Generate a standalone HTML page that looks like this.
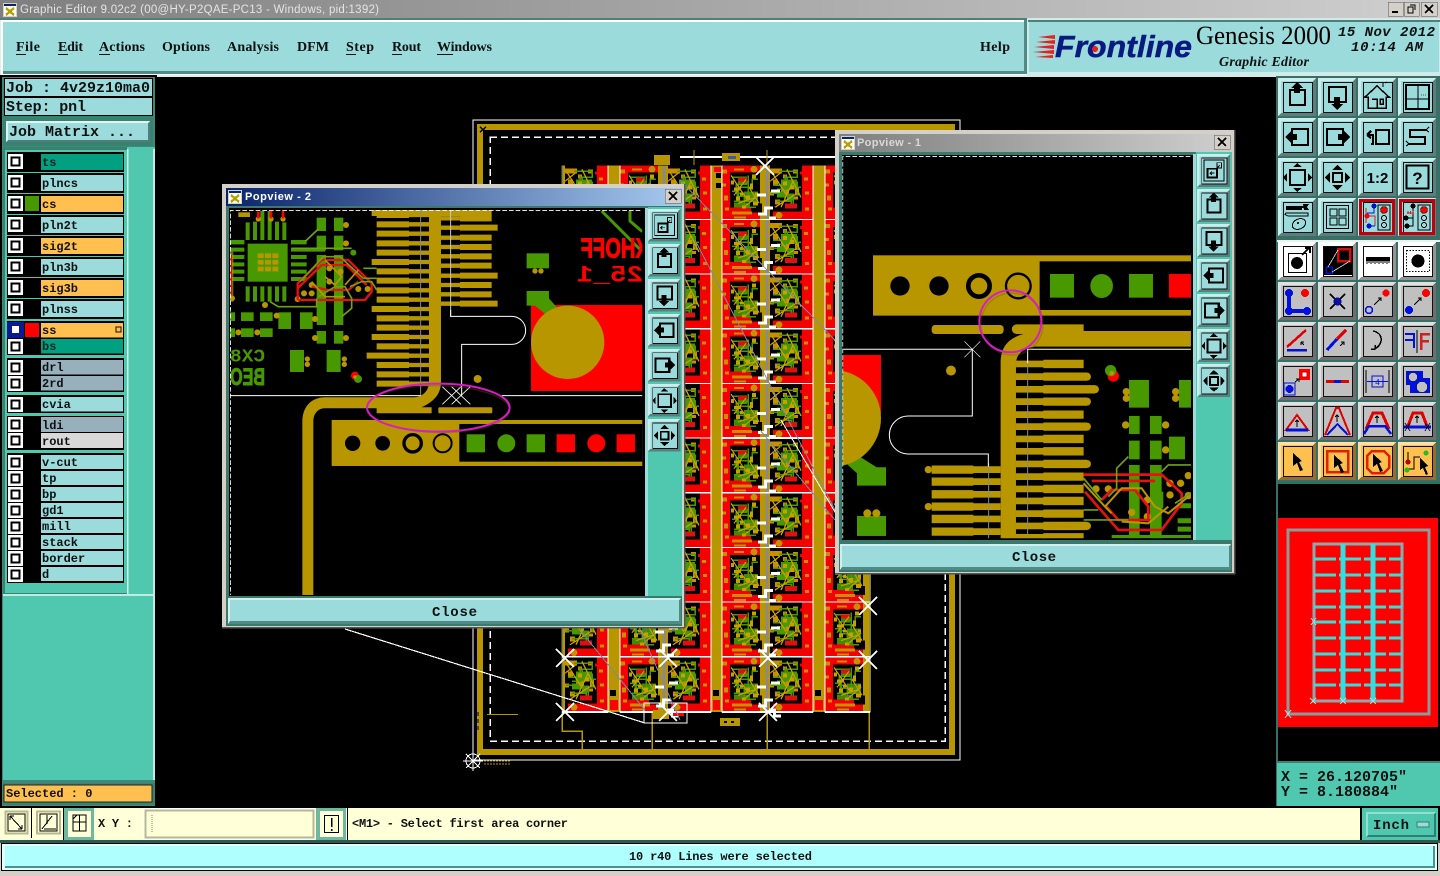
<!DOCTYPE html>
<html><head><meta charset="utf-8"><title>Graphic Editor</title>
<style>
html,body{margin:0;padding:0;background:#000;width:1440px;height:876px;overflow:hidden}
svg{display:block}
.m{font-family:"Liberation Mono",monospace;font-weight:bold;fill:#101010}
.s{font-family:"Liberation Serif",serif;font-weight:bold;fill:#101010;font-size:14px}
.a{font-family:"Liberation Sans",sans-serif;font-weight:bold;font-size:11px}
</style></head><body>
<svg width="1440" height="876" viewBox="0 0 1440 876" xmlns="http://www.w3.org/2000/svg" shape-rendering="crispEdges">
<defs>
<linearGradient id="tg" x1="0" x2="1" y1="0" y2="0"><stop offset="0" stop-color="#7f7f7f"/><stop offset="1" stop-color="#cfcfcf"/></linearGradient>
<linearGradient id="tb" x1="0" x2="1" y1="0" y2="0"><stop offset="0" stop-color="#0a246a"/><stop offset="1" stop-color="#a6caf0"/></linearGradient>
<clipPath id="c2"><rect x="15" y="75" width="1237" height="1155"/></clipPath>
<clipPath id="c1"><rect x="22" y="78" width="1046" height="1147"/></clipPath>

<g id="ico"><rect x="0" y="0" width="14" height="14" fill="#d4d0c8"/><rect x="1" y="1" width="12" height="2" fill="#0a246a"/><rect x="1" y="3" width="12" height="10" fill="#fff"/><path d="M3 5L11 12M11 5L3 12" stroke="#b8a000" stroke-width="2.4"/></g>

<!-- button frame -->
<g id="bt"><rect width="38" height="38" fill="currentColor"/>
<path d="M0 0H38L35 3H3V35L0 38Z" fill="#fff" opacity=".5"/>
<path d="M38 38H0L3 35H35V3L38 0Z" fill="#000" opacity=".42"/>
<rect x="5.5" y="4.5" width="29" height="30" fill="none" stroke="#111" stroke-width="1"/></g>

<g id="i-up" fill="none" stroke="#000" stroke-width="2.4"><rect x="12" y="12" width="15" height="15"/><path d="M19 4L25 10H22V15H16V10H13Z" fill="#000" stroke="none"/></g>
<g id="i-down" fill="none" stroke="#000" stroke-width="2.4"><rect x="11" y="9" width="17" height="15"/><path d="M19 32L13 26H16V19H22V26H25Z" fill="#000" stroke="none"/></g>
<g id="i-left" fill="none" stroke="#000" stroke-width="2.4"><rect x="14" y="11" width="16" height="16"/><path d="M7 19L13 13V16H19V22H13V25Z" fill="#000" stroke="none"/></g>
<g id="i-right" fill="none" stroke="#000" stroke-width="2.4"><rect x="9" y="11" width="16" height="16"/><path d="M32 19L26 13V16H20V22H26V25Z" fill="#000" stroke="none"/></g>
<g id="i-exp"><rect x="12" y="12" width="15" height="15" fill="none" stroke="#000" stroke-width="2"/><path d="M15 9L19 5L24 9ZM15 30L19 34L24 30ZM9 15L5 19.5L9 24ZM30 15L34 19.5L30 24Z" fill="#000"/></g>
<g id="i-arr"><rect x="15" y="15" width="9" height="9" fill="none" stroke="#000" stroke-width="2"/><path d="M14 12L19.500 7L25 12ZM14 27L19.500 32L25 27ZM12 14L7 19.500L12 25ZM27 14L32 19.500L27 25Z" fill="#000"/></g>
<g id="i-win" fill="none" stroke="#000"><rect x="8" y="7" width="23" height="24" stroke-width="1"/><rect x="12" y="17" width="11" height="10" stroke-width="2"/><rect x="23" y="10" width="5" height="6" stroke-width="1"/><path d="M20 22H15M17 20L15 22L17 24" stroke-width="1"/><path d="M22 17L26 13" stroke-width="1"/></g>

<!-- pcb half cells -->
<g id="a">
<rect width="40" height="54.7" fill="#f40000"/>
<rect x="8" y="7" width="31" height="35" fill="#000"/>
<rect x="38" width="8" height="54.7" fill="#b89600"/>
<rect x="29" y="38" width="11" height="9" fill="#000"/>
<circle cx="32" cy="4" r="3.400" fill="#c89000"/>
<path d="M0 4h5v4h-5zM0 18h4v3h-4zM2 30h4v5h-4zM10 46h20v3h-20zM12 3h10v2h-10zM3 42h4v3h-4zM12 51h12v2h-12z" fill="#c89000"/>
<path d="M10 12h14v7h-8v12h16M14 18v10h8v8h10M12 36h10v6h12M26 10v20h8M18 22h12v-8h6M10 26h5v10" fill="none" stroke="#489800" stroke-width="1.500"/>
<path d="M16 15h10v4h-10zM22 26h14v10h-14zM12 37h16v5h-16z" fill="#489800" opacity=".9"/>
<path d="M16 12h9v4h-9z" fill="#e01010"/>
<path d="M12 22h7v3h-7zM28 18h3v6h-3zM24 30h4v4h-4zM31 36h5v4h-5zM14 31h4v4h-4zM20 40h4v3h-4zM30 9h4v4h-4zM9 15h3v4h-3zM18 27h3v3h-3zM33 27h3v3h-3z" fill="#c8a000"/>
<path d="M9 10l16 24M27 22l10 16M16 38l18-6M12 30l12-16M22 42l14-12" stroke="#c8a000" stroke-width="1.200" fill="none"/>
</g>
<g id="b">
<rect width="46" height="54.7" fill="#000"/>
<rect x="35" width="11" height="54.7" fill="#f40000"/>
<rect x="6" y="46" width="34" height="8.7" fill="#f40000"/>
<circle cx="12" cy="50" r="3.400" fill="#c89000"/>
<rect x="33" y="6" width="4" height="3" fill="#f40000"/>
<rect y="0" width="3" height="54.7" fill="#b89600"/>
<path d="M3 3h12v5h-12zM6 14h5v6h-5zM26 4h5v4h-5zM14 24h8v5h-8zM28 22h4v8h-4zM8 34h5v5h-5zM21 38h4v4h-4zM37 12h4v3h-4zM38 26h4v3h-4zM38 42h4v3h-4zM16 9h4v4h-4zM3 26h4v4h-4zM26 31h5v3h-5z" fill="#c89000"/>
<path d="M12 6h18v6h-10v10h14M6 20h10v10h10v10M10 36h14v6M18 10v14h-8M30 16v14M4 28h8" fill="none" stroke="#489800" stroke-width="1.500"/>
<path d="M14 14h16v10h-16zM10 26h9v6h-9zM20 28h7v7h-7z" fill="#489800"/>
<path d="M18 38h12v5h-12z" fill="#e01010"/>
<path d="M5 7l14 22M20 4l14 28M8 42l22-14M3 16l10-8M14 42l12-26" stroke="#c8a000" stroke-width="1.300" fill="none"/>
<path d="M16 16h4v4h-4zM23 20h4v4h-4z" fill="#c8a000"/>
</g>
<g id="st" fill="#fff">
<rect x="-10" y="28" width="9" height="3"/><rect x="4" y="24" width="9" height="3"/>
<path d="M-9 50h9v-6h6v-3h-9v6h-6zM6 60h8v-3h-5v-6h-7v3h4z"/>
</g>
<g id="row">
<use href="#b" x="562"/><use href="#a" x="620"/><use href="#b" x="665"/><use href="#a" x="722"/><use href="#b" x="767"/><use href="#a" x="825"/>
<rect x="608" width="12" height="54.7" fill="#b89600"/><rect x="711" width="11" height="54.7" fill="#b89600"/><rect x="813" width="12" height="54.700" fill="#b89600"/>
<path d="M664 0v55M767 0v55" stroke="#8a8a8a" stroke-width="3"/>
<path d="M562 0v55M870 0v55" stroke="#808060" stroke-width="1.500"/>
<path d="M620 0v55M711 0v55M722 0v55M813 0v55M825 0v55M608 0v55" stroke="#fff" stroke-width="1"/>
<rect x="562" y="53.500" width="46" height="2" fill="#fff"/><rect x="620" y="53.500" width="91" height="2" fill="#fff"/><rect x="722" y="53.500" width="91" height="2" fill="#fff"/><rect x="825" y="53.500" width="45" height="2" fill="#fff"/>
<use href="#st" x="767"/><use href="#st" x="665"/>
</g>
<g id="x"><path d="M-9 -9L9 9M9 -9L-9 9" stroke="#fff" stroke-width="1.500"/></g>
</defs>

<!-- base -->
<rect width="1440" height="876" fill="#000"/>
<rect width="1440" height="18" fill="url(#tg)"/>
<use href="#ico" x="3" y="3"/>
<text x="20" y="13" class="a" style="font-weight:normal;font-size:11.500px" fill="#e4e4e4" textLength="359">Graphic Editor 9.02c2 (00@HY-P2QAE-PC13 - Windows, pid:1392)</text>
<g><rect x="1388" y="2" width="15" height="14" fill="#d4d0c8" stroke="#555" stroke-width=".5"/><rect x="1404" y="2" width="15" height="14" fill="#d4d0c8" stroke="#555" stroke-width=".5"/><rect x="1421" y="2" width="16" height="14" fill="#d4d0c8" stroke="#555" stroke-width=".5"/><path d="M1392 12h6" stroke="#000" stroke-width="2"/><path d="M1408 7h5v6h-5zM1410 5h5v5" fill="none" stroke="#000" stroke-width="1.200"/><path d="M1425 5l8 8M1433 5l-8 8" stroke="#000" stroke-width="1.500"/></g>

<!-- menu -->
<rect y="18" width="1440" height="59" fill="#d8f0ee"/>
<rect x="0" y="18" width="1027" height="2" fill="#4f7f78"/>
<rect x="1" y="20" width="1026" height="55" fill="#fff"/>
<rect x="3" y="22" width="1022" height="50" fill="#9bdbdb"/>
<rect x="3" y="71" width="1024" height="3" fill="#4f8a84"/>
<rect x="1024" y="20" width="3" height="54" fill="#4f8a84"/>
<text x="16" y="51" class="s" textLength="24">File</text><rect x="16" y="54" width="10" height="1" fill="#111"/>
<text x="58" y="51" class="s" textLength="25">Edit</text><rect x="58" y="54" width="10" height="1" fill="#111"/>
<text x="99" y="51" class="s" textLength="46">Actions</text><rect x="99" y="54" width="11" height="1" fill="#111"/>
<text x="162" y="51" class="s" textLength="48">Options</text>
<text x="227" y="51" class="s" textLength="52">Analysis</text>
<text x="297" y="51" class="s" textLength="32">DFM</text>
<text x="346" y="51" class="s" textLength="28">Step</text><rect x="346" y="54" width="10" height="1" fill="#111"/>
<text x="392" y="51" class="s" textLength="29">Rout</text><rect x="392" y="54" width="10" height="1" fill="#111"/>
<text x="437" y="51" class="s" textLength="55">Windows</text><rect x="437" y="54" width="16" height="1" fill="#111"/>
<text x="980" y="51" class="s" textLength="30">Help</text>

<!-- logo panel -->
<rect x="1027" y="18" width="413" height="59" fill="#d0ecea"/>
<rect x="1028" y="20" width="412" height="2" fill="#4f7f78"/>
<rect x="1029" y="22" width="410" height="50" fill="#9bdbdb"/>
<path d="M1038 37L1055 35V39ZM1036 42L1055 40V44ZM1034 47L1054 45V49ZM1033 52L1054 50V54ZM1035 57L1053 55V58Z" fill="#e82020" shape-rendering="auto"/>
<text x="1055" y="57" font-family="Liberation Sans" font-weight="bold" font-style="italic" font-size="31" fill="#0a1a80" textLength="137" lengthAdjust="spacingAndGlyphs" stroke="#0a1a80" stroke-width=".5">Frontline</text>
<circle cx="1095" cy="49" r="3" fill="#e82020"/>
<text x="1196" y="44" font-family="Liberation Serif" font-size="26" fill="#000" textLength="135" lengthAdjust="spacingAndGlyphs">Genesis 2000</text>
<text x="1219" y="66" font-family="Liberation Serif" font-weight="bold" font-style="italic" font-size="14" fill="#111" textLength="90">Graphic Editor</text>
<text x="1338" y="36" font-family="Liberation Mono" font-style="italic" font-weight="bold" font-size="14" fill="#111" textLength="97">15 Nov 2012</text>
<text x="1351" y="51" font-family="Liberation Mono" font-style="italic" font-weight="bold" font-size="14" fill="#111" textLength="72">10:14 AM</text>

<!-- left panel -->
<rect x="0" y="75" width="157" height="733" fill="#000"/>
<rect x="2" y="77" width="153" height="729" fill="#3d8a7a"/>
<rect x="3" y="78" width="150" height="68" fill="#3a8270"/>
<rect x="4" y="78" width="149" height="19" fill="#000"/><rect x="5" y="79" width="147" height="17" fill="#9bdbdb"/>
<rect x="4" y="97" width="149" height="19" fill="#000"/><rect x="5" y="98" width="147" height="17" fill="#9bdbdb"/>
<text x="6" y="92" class="m" font-size="15" textLength="144">Job : 4v29z10ma0</text>
<text x="6" y="111" class="m" font-size="15" textLength="80">Step: pnl</text>
<rect x="6" y="121" width="144" height="21" fill="#9bdbdb"/>
<path d="M6 121H150L148 123H8V140L6 142Z" fill="#fff" opacity=".7"/><path d="M150 142H6L8 140H148V123L150 121Z" fill="#4f7f78"/>
<text x="9" y="136" class="m" font-size="15" textLength="126">Job Matrix ...</text>
<rect x="3" y="147" width="152" height="633" fill="#50c8b0"/>
<rect x="3" y="147" width="124" height="447" fill="#3a8270"/>
<rect x="5" y="150" width="122" height="443" fill="#50c8b0"/>
<rect x="127" y="149" width="1.500" height="445" fill="#d0f0e8"/>
<rect x="153" y="149" width="2" height="631" fill="#c0ece0"/>
<rect x="3" y="594" width="152" height="2" fill="#c0ece0"/>

<!-- layer rows -->
<g>
<g id="lay">
<rect x="7" y="152" width="117" height="20" fill="#000"/><rect x="7" y="173" width="117" height="20" fill="#000"/><rect x="7" y="194" width="117" height="20" fill="#000"/><rect x="7" y="215" width="117" height="20" fill="#000"/><rect x="7" y="236" width="117" height="20" fill="#000"/><rect x="7" y="257" width="117" height="20" fill="#000"/><rect x="7" y="278" width="117" height="20" fill="#000"/><rect x="7" y="299" width="117" height="20" fill="#000"/>
<rect x="7" y="321" width="117" height="34" fill="#000"/><rect x="7" y="358" width="117" height="34" fill="#000"/><rect x="7" y="395" width="117" height="18" fill="#000"/><rect x="7" y="416" width="117" height="34" fill="#000"/><rect x="7" y="453" width="117" height="130" fill="#000"/>
</g>
<rect x="41" y="154" width="82" height="16" fill="#00a080"/><rect x="41" y="175" width="82" height="16" fill="#9bdbdb"/><rect x="41" y="196" width="82" height="16" fill="#ffc050"/><rect x="41" y="217" width="82" height="16" fill="#9bdbdb"/><rect x="41" y="238" width="82" height="16" fill="#ffc050"/><rect x="41" y="259" width="82" height="16" fill="#9bdbdb"/><rect x="41" y="280" width="82" height="16" fill="#ffc050"/><rect x="41" y="301" width="82" height="16" fill="#9bdbdb"/>
<rect x="41" y="323" width="82" height="14.500" fill="#ffc050"/><rect x="41" y="339" width="82" height="14.500" fill="#00a080"/>
<rect x="41" y="360" width="82" height="14.500" fill="#98b0bc"/><rect x="41" y="376" width="82" height="14.500" fill="#98b0bc"/>
<rect x="41" y="397" width="82" height="14.500" fill="#9bdbdb"/>
<rect x="41" y="417" width="82" height="15" fill="#98b0bc"/><rect x="41" y="433" width="82" height="15" fill="#d8d8d8"/>
<rect x="41" y="455" width="82" height="14" fill="#9bdbdb"/><rect x="41" y="471" width="82" height="14" fill="#9bdbdb"/><rect x="41" y="487" width="82" height="14" fill="#9bdbdb"/><rect x="41" y="503" width="82" height="14" fill="#9bdbdb"/><rect x="41" y="519" width="82" height="14" fill="#9bdbdb"/><rect x="41" y="535" width="82" height="14" fill="#9bdbdb"/><rect x="41" y="551" width="82" height="14" fill="#9bdbdb"/><rect x="41" y="567" width="82" height="14" fill="#9bdbdb"/>
<rect x="25" y="196" width="14" height="15" fill="#489800"/>
<rect x="25" y="323" width="14" height="14" fill="#f00"/>
<rect x="7" y="322" width="17" height="16" fill="#0a1a90"/>
<g fill="#fff"><rect x="8" y="154" width="15" height="15"/><rect x="8" y="175" width="15" height="15"/><rect x="8" y="196" width="15" height="15"/><rect x="8" y="217" width="15" height="15"/><rect x="8" y="238" width="15" height="15"/><rect x="8" y="259" width="15" height="15"/><rect x="8" y="280" width="15" height="15"/><rect x="8" y="301" width="15" height="15"/><rect x="8" y="339" width="15" height="15"/><rect x="8" y="360" width="15" height="15"/><rect x="8" y="376" width="15" height="15"/><rect x="8" y="397" width="15" height="15"/><rect x="8" y="417" width="15" height="15"/><rect x="8" y="433" width="15" height="15"/><rect x="8" y="455" width="15" height="15"/><rect x="8" y="471" width="15" height="15"/><rect x="8" y="487" width="15" height="15"/><rect x="8" y="503" width="15" height="15"/><rect x="8" y="519" width="15" height="15"/><rect x="8" y="535" width="15" height="15"/><rect x="8" y="551" width="15" height="15"/><rect x="8" y="567" width="15" height="15"/></g>
<g fill="none" stroke="#000" stroke-width="2"><rect x="11.500" y="157.500" width="8" height="8"/><rect x="11.500" y="178.500" width="8" height="8"/><rect x="11.500" y="199.500" width="8" height="8"/><rect x="11.500" y="220.500" width="8" height="8"/><rect x="11.500" y="241.500" width="8" height="8"/><rect x="11.500" y="262.500" width="8" height="8"/><rect x="11.500" y="283.500" width="8" height="8"/><rect x="11.500" y="304.500" width="8" height="8"/><rect x="11.500" y="342.500" width="8" height="8"/><rect x="11.500" y="363.500" width="8" height="8"/><rect x="11.500" y="379.500" width="8" height="8"/><rect x="11.500" y="400.500" width="8" height="8"/><rect x="11.500" y="420.500" width="8" height="8"/><rect x="11.500" y="436.500" width="8" height="8"/><rect x="11.500" y="458.500" width="8" height="8"/><rect x="11.500" y="474.500" width="8" height="8"/><rect x="11.500" y="490.500" width="8" height="8"/><rect x="11.500" y="506.500" width="8" height="8"/><rect x="11.500" y="522.500" width="8" height="8"/><rect x="11.500" y="538.500" width="8" height="8"/><rect x="11.500" y="554.500" width="8" height="8"/><rect x="11.500" y="570.500" width="8" height="8"/></g>
<rect x="12" y="326" width="7" height="7" fill="#fff"/>
<rect x="116" y="327" width="5" height="5" fill="none" stroke="#111" stroke-width="1"/>
<g class="m" font-size="12" style="font-family:'Liberation Mono',monospace;font-weight:bold">
<text x="42" y="166" fill="#04261e">ts</text><text x="42" y="187">plncs</text><text x="42" y="208">cs</text><text x="42" y="229">pln2t</text><text x="42" y="250">sig2t</text><text x="42" y="271">pln3b</text><text x="42" y="292">sig3b</text><text x="42" y="313">plnss</text>
<text x="42" y="334">ss</text><text x="42" y="350" fill="#04261e">bs</text><text x="42" y="371">drl</text><text x="42" y="387">2rd</text><text x="42" y="408">cvia</text><text x="42" y="429">ldi</text><text x="42" y="445">rout</text>
<text x="42" y="466">v-cut</text><text x="42" y="482">tp</text><text x="42" y="498">bp</text><text x="42" y="514">gd1</text><text x="42" y="530">mill</text><text x="42" y="546">stack</text><text x="42" y="562">border</text><text x="42" y="578">d</text>
</g>
</g>
<rect x="3" y="783" width="152" height="22" fill="#3a8270"/>
<rect x="4" y="785" width="148" height="17" fill="#ffc050" stroke="#222" stroke-width=".6"/>
<text x="6" y="797" class="m" font-size="12">Selected : 0</text>

<!-- main board -->
<path d="M473 120H960V760H473Z" fill="none" stroke="#fff" stroke-width="1"/>
<rect x="480" y="127" width="472" height="625" fill="none" stroke="#b89600" stroke-width="6"/>
<path d="M490 137H945V741H490Z" fill="none" stroke="#fff" stroke-width="1.500" stroke-dasharray="7 4"/>
<path d="M487 714.500h31" stroke="#b89600" stroke-width="1"/>
<path d="M478 712v20" stroke="#504040" stroke-width="2" stroke-dasharray="4 3"/>
<path d="M562 712v19h20v18M652 712v37M767 712v37M869 712v37" fill="none" stroke="#b89600" stroke-width="1.500"/>
<rect x="720" y="718" width="20" height="8" fill="#b89600"/><rect x="724" y="721" width="3" height="2" fill="#000"/><rect x="731" y="721" width="3" height="2" fill="#000"/>
<path d="M680 157H835" stroke="#fff" stroke-width="2"/>
<rect x="654" y="155" width="16" height="10" fill="#b89600"/><rect x="722" y="153" width="18" height="8" fill="#b89600"/><rect x="728" y="156" width="8" height="3" fill="#3a5ab0"/>
<path d="M694 150V165M767 150V165" stroke="#b89600" stroke-width="1"/>
<use href="#row" y="165.300"/><use href="#row" y="220"/><use href="#row" y="274.700"/><use href="#row" y="329.300"/><use href="#row" y="384"/><use href="#row" y="438.700"/><use href="#row" y="493.300"/><use href="#row" y="548"/><use href="#row" y="602.700"/><use href="#row" y="657.300"/>
<rect x="722" y="437" width="91" height="2" fill="#fff"/>
<g fill="#000"><rect x="716" y="173" width="5" height="5"/><rect x="716" y="183" width="5" height="5"/></g><rect x="714" y="167" width="7" height="5" fill="#f00"/>
<g><rect x="610" y="690" width="6" height="6" fill="#000"/><rect x="610" y="700" width="8" height="10" fill="#f00"/><rect x="713" y="690" width="6" height="6" fill="#000"/><rect x="713" y="700" width="7" height="10" fill="#f00"/><rect x="815" y="690" width="6" height="6" fill="#000"/><rect x="815" y="700" width="8" height="10" fill="#f00"/></g>
<rect x="653" y="710" width="16" height="9" fill="#b89600"/><rect x="673" y="713" width="11" height="3" fill="#f00"/>
<rect x="644" y="703" width="43" height="20" fill="none" stroke="#fff" stroke-width="1"/>
<path d="M345 629L645 723" stroke="#fff" stroke-width="1.200"/>
<path d="M680 180L835 340M695 240L835 510M760 430L835 520" stroke="#7f88a8" stroke-width="1" fill="none"/>
<path d="M580 630L645 710M640 630L680 720" stroke="#7f88a8" stroke-width="1" fill="none"/>
<path d="M781 420L835 512" stroke="#fff" stroke-width="1"/>
<use href="#x" x="565" y="712"/><use href="#x" x="768" y="712"/><use href="#x" x="668" y="712"/><use href="#x" x="868" y="606"/><use href="#x" x="868" y="660"/><use href="#x" x="565" y="658"/><use href="#x" x="668" y="658"/><use href="#x" x="768" y="658"/><use href="#x" x="765" y="166"/>
<g fill="none" stroke="#fff" stroke-width="1"><circle cx="473" cy="761" r="7"/><path d="M463 761H483M473 751V771M466 754L480 768M480 754L466 768"/></g>
<path d="M484 761H510M484 764H510" stroke="#b89600" stroke-dasharray="2 1"/>
<path d="M480 127l6 5M486 127l-6 5" stroke="#000" stroke-width="1.500"/>

<!-- Right column -->
<rect x="1277" y="76" width="163" height="407" fill="#3a6f66"/>
<rect x="1277" y="481" width="163" height="3" fill="#2f6f60"/>
<rect x="1276" y="76" width="2" height="732" fill="#3a6f66"/>
<g color="#9bdbdb">
<g transform="translate(1278,78)"><use href="#bt"/><use href="#i-up"/></g>
<g transform="translate(1318,78)"><use href="#bt"/><use href="#i-down"/></g>
<g transform="translate(1358,78)"><use href="#bt"/><path d="M19 8L31 19H28V30H10V19H7ZM14 21H19V30M22 21H25V26H22Z" fill="none" stroke="#000" stroke-width="1.500"/><path d="M25 9V5M27 5l2-1" stroke="#000"/></g>
<g transform="translate(1398,78)"><use href="#bt"/><rect x="8" y="7" width="23" height="24" fill="none" stroke="#000" stroke-width="2"/><path d="M20 7V31M8 21H31" stroke="#000"/><path d="M23 17h6" stroke="#555" stroke-dasharray="1 1"/></g>
<g transform="translate(1278,118)"><use href="#bt"/><use href="#i-left"/></g>
<g transform="translate(1318,118)"><use href="#bt"/><use href="#i-right"/></g>
<g transform="translate(1358,118)"><use href="#bt"/><rect x="18" y="12" width="13" height="14" fill="none" stroke="#000" stroke-width="2"/><path d="M13 26H15V17H9M9 17l4-4M9 17l4 3" fill="none" stroke="#000" stroke-width="2.200"/></g>
<g transform="translate(1398,118)"><use href="#bt"/><path d="M28 12H12V19H27V26H11" fill="none" stroke="#000" stroke-width="2.400"/><path d="M28 12l3-3M28 12l3 2M11 26l-3-3M11 26l-3 2" stroke="#000" fill="none"/></g>
<g transform="translate(1278,158)"><use href="#bt"/><use href="#i-exp"/></g>
<g transform="translate(1318,158)"><use href="#bt"/><use href="#i-arr"/></g>
<g transform="translate(1358,158)"><use href="#bt"/><text x="19.500" y="25" text-anchor="middle" font-family="Liberation Sans" font-weight="bold" font-size="15" fill="#000">1:2</text></g>
<g transform="translate(1398,158)"><use href="#bt"/><rect x="8.500" y="7.500" width="22" height="23" fill="none" stroke="#000" stroke-width="2"/><text x="19.500" y="26" text-anchor="middle" font-family="Liberation Sans" font-weight="bold" font-size="17" fill="#000">?</text></g>
<g transform="translate(1278,198)"><use href="#bt"/><path d="M8 9H27M8 11H24" stroke="#000" stroke-width="2"/><path d="M25 6h6l-2 3 2 3h-5z" fill="#000"/><path d="M8 15H30V18H10L7 16.500Z" fill="none" stroke="#000"/><ellipse cx="21" cy="26" rx="7" ry="5" transform="rotate(-25 21 26)" fill="none" stroke="#000"/><circle cx="20" cy="25" r="1" fill="#000"/></g>
<g transform="translate(1318,198)"><use href="#bt"/><rect x="8.500" y="7.500" width="22" height="23" fill="none" stroke="#000"/><g fill="none" stroke="#000"><rect x="12" y="11" width="7" height="7"/><rect x="21" y="11" width="7" height="7"/><rect x="12" y="20" width="7" height="7"/><rect x="21" y="20" width="7" height="7"/></g></g>
<g transform="translate(1358,198)"><use href="#bt"/><rect x="2.500" y="2.500" width="33" height="33" fill="none" stroke="#c00010" stroke-width="3"/><path d="M8 10V25M8 18H17V28M8 18" fill="none" stroke="#d02020"/><circle cx="9" cy="18" r="2.500" fill="#f00"/><circle cx="16" cy="8" r="2.500" fill="#0010d0"/><circle cx="11" cy="28" r="2.500" fill="#0010d0"/><path d="M16 10V15H9M11 28H17" stroke="#0010d0" fill="none"/><rect x="20" y="7" width="12" height="25" fill="none" stroke="#000"/><circle cx="26" cy="12" r="3.500" fill="#f00" stroke="#000" stroke-width=".5"/><circle cx="26" cy="20" r="2.500" fill="none" stroke="#000"/><circle cx="26" cy="27" r="2.500" fill="none" stroke="#000"/></g>
<g transform="translate(1398,198)"><use href="#bt"/><rect x="2.500" y="2.500" width="33" height="33" fill="none" stroke="#c00010" stroke-width="3"/><path d="M15 8V20H8M15 20V28H9" fill="none" stroke="#000"/><circle cx="8" cy="20" r="2.500" fill="#000"/><circle cx="15" cy="8" r="2.500" fill="#000"/><circle cx="9" cy="28" r="2.500" fill="#000"/><path d="M9 15h7M10 13v3M12.500 13v3M15 13v3" stroke="#d02020"/><rect x="20" y="7" width="12" height="25" fill="none" stroke="#000"/><circle cx="26" cy="12" r="3.500" fill="#f00" stroke="#000" stroke-width=".5"/><circle cx="26" cy="20" r="2.500" fill="none" stroke="#000"/><circle cx="26" cy="27" r="2.500" fill="none" stroke="#000"/></g>
</g>

<!-- second group -->
<rect x="1277" y="240" width="163" height="2" fill="#e8f4f0"/>
<g color="#ffffff">
<g transform="translate(1278,242)"><use href="#bt"/><rect x="10.500" y="11.500" width="18" height="19" fill="none" stroke="#000"/><circle cx="19" cy="21" r="6" fill="#000"/><path d="M24 13L31 6M27 6H32V11" stroke="#000" stroke-width="2" fill="none"/></g>
<g transform="translate(1318,242)"><use href="#bt"/><rect x="6" y="5" width="28" height="28" fill="#000"/><rect x="20" y="7" width="12" height="12" fill="none" stroke="#d01010" stroke-width="2.500"/><rect x="8" y="25" width="6" height="6" fill="none" stroke="#0a10d0" stroke-width="1.500"/><path d="M10 25L20 8M14 30L32 19" stroke="#ddd" fill="none" stroke-width=".8"/></g>
<g transform="translate(1358,242)"><use href="#bt"/><rect x="8" y="15" width="24" height="4" fill="#000"/><path d="M9 19v3M11 19v2M13 19v3M15 19v2M17 19v3M19 19v2M21 19v3M23 19v2M25 19v3M27 19v2M29 19v3M31 19v2" stroke="#000"/></g>
<g transform="translate(1398,242)"><use href="#bt"/><rect x="8.500" y="8.500" width="23" height="21" fill="none" stroke="#000" stroke-dasharray="1.500 1.500"/><circle cx="20" cy="19" r="6.500" fill="#000"/></g>
</g>
<g color="#c0c0c0">
<g transform="translate(1278,282)"><use href="#bt"/><path d="M11 11V29H28" stroke="#0010e0" stroke-width="4" fill="none"/><circle cx="11" cy="11" r="4" fill="#0010e0"/><circle cx="11" cy="29" r="4" fill="#0010e0"/><circle cx="29" cy="29" r="4" fill="#0010e0"/><circle cx="27" cy="11" r="4" fill="#f00"/></g>
<g transform="translate(1318,282)"><use href="#bt"/><path d="M12 12L27 27M27 12L12 27" stroke="#000" stroke-width="2"/><circle cx="19.500" cy="19.500" r="4" fill="#0a10a0"/></g>
<g transform="translate(1358,282)"><use href="#bt"/><circle cx="11" cy="28" r="3.500" fill="none" stroke="#0010e0" stroke-width="1.500"/><circle cx="28" cy="11" r="3.500" fill="#f00"/><path d="M16 23L23 16M20 16H23V19" stroke="#000" fill="none"/></g>
<g transform="translate(1398,282)"><use href="#bt"/><circle cx="11" cy="28" r="4" fill="#0010e0"/><circle cx="28" cy="11" r="4" fill="#f00"/><path d="M16 23L23 16M20 16H23V19" stroke="#000" fill="none"/></g>
<g transform="translate(1278,322)"><use href="#bt"/><path d="M9 25L28 8" stroke="#e00000" stroke-width="2.500"/><path d="M9 28H29" stroke="#0010e0" stroke-width="2.500"/><path d="M23 20l3 3M23 20h3M23 20v3" stroke="#000" fill="none"/></g>
<g transform="translate(1318,322)"><use href="#bt"/><path d="M19 17L28 8" stroke="#e00000" stroke-width="3"/><path d="M9 28L19 17" stroke="#0010e0" stroke-width="3"/><path d="M22 24l4-4M23 20h3v3" stroke="#000" fill="none"/></g>
<g transform="translate(1358,322)"><use href="#bt"/><path d="M15 9C25 11 26 21 17 27M17 27V23M17 27H13" fill="none" stroke="#000" stroke-width="1.500"/></g>
<g transform="translate(1398,322)"><use href="#bt"/><path d="M7 12H16V26M7 18H15" fill="none" stroke="#0010e0" stroke-width="2"/><path d="M32 12H23V28M23 19H31" fill="none" stroke="#d02020" stroke-width="2.500"/><path d="M19 8V31" stroke="#000"/></g>
<g transform="translate(1278,362)"><use href="#bt"/><rect x="21" y="7" width="11" height="11" fill="#f00"/><rect x="24" y="10" width="5" height="5" fill="#fff" stroke="#c00"/><rect x="6" y="21" width="11" height="12" fill="none" stroke="#0010e0"/><circle cx="11.500" cy="27" r="4" fill="#0010e0"/><path d="M17 20l4-3M18 17h3v3" stroke="#000" fill="none"/></g>
<g transform="translate(1318,362)"><use href="#bt"/><path d="M8 19.500H31" stroke="#e00000" stroke-width="3"/><path d="M16 19.500H23" stroke="#0010e0" stroke-width="3"/></g>
<g transform="translate(1358,362)"><use href="#bt"/><path d="M8 8V31M31 8V31M9 19.500H30" stroke="#000" fill="none"/><path d="M9 19.500H30" stroke="#0010e0"/><rect x="14" y="14" width="11" height="11" fill="none" stroke="#0010e0"/><text x="19.500" y="23" text-anchor="middle" font-family="Liberation Sans" font-size="8" fill="#0010e0">4</text></g>
<g transform="translate(1398,362)"><use href="#bt"/><path d="M8 9H25V16H32V31H12V23H8Z" fill="#0010e0"/><circle cx="15" cy="15" r="4.500" fill="#c0c0c0" stroke="#000" stroke-width=".4"/><circle cx="24" cy="25" r="5.500" fill="#c0c0c0" stroke="#000" stroke-width=".4"/></g>
<g transform="translate(1278,402)"><use href="#bt"/><path d="M19 13L30 28H8Z" fill="none" stroke="#e00000" stroke-width="2"/><path d="M8 28H30" stroke="#0010e0" stroke-width="3"/><path d="M19 18V25M17 20L19 18L21 20" stroke="#000" fill="none"/></g>
<g transform="translate(1318,402)"><use href="#bt"/><path d="M7 33L18 6H21L32 33" fill="none" stroke="#e00000" stroke-width="2"/><path d="M9 33L19.500 22L30 33" fill="none" stroke="#0010e0" stroke-width="2"/><path d="M19 13V20M17 15L19 13L21 15" stroke="#000" fill="none"/></g>
<g transform="translate(1358,402)"><use href="#bt"/><path d="M8 27L15 11H24L31 27" fill="none" stroke="#e00000" stroke-width="3"/><path d="M6 32L11 24H27L33 32" fill="none" stroke="#0010e0" stroke-width="2.500"/><path d="M19 14V21M17 16L19 14L21 16" stroke="#000" fill="none"/></g>
<g transform="translate(1398,402)"><use href="#bt"/><path d="M10 24L15 11H24L29 24" fill="none" stroke="#e00000" stroke-width="3"/><path d="M6 25H33" stroke="#0010e0" stroke-width="3"/><path d="M19 14V21M17 16L19 14L21 16M7 21l5 8M12 21l-5 8M27 21l5 8M32 21l-5 8" stroke="#000" fill="none" stroke-width=".8"/></g>
</g>
<g color="#ffc050">
<g transform="translate(1278,442)"><use href="#bt"/><path d="M15 11L24 19L21 20L25 28L22 29L19 21L15 24Z" fill="#000"/></g>
<g transform="translate(1318,442)"><use href="#bt"/><rect x="9" y="9" width="21" height="21" fill="none" stroke="#e02000" stroke-width="2.500"/><path d="M16 13L25 21L22 22L26 30L23 31L20 23L16 26Z" fill="#000"/></g>
<g transform="translate(1358,442)"><use href="#bt"/><path d="M14 9H26L31 14V26L26 31H14L9 26V14Z" fill="none" stroke="#e02000" stroke-width="2.500"/><path d="M15 12L24 20L21 21L25 29L22 30L19 22L15 25Z" fill="#000"/></g>
<g transform="translate(1398,442)"><use href="#bt"/><path d="M10 10V22M10 27H16V15H22" fill="none" stroke="#000"/><circle cx="10" cy="20" r="2.500" fill="#c00000"/><circle cx="9" cy="28" r="2.500" fill="#20c020"/><circle cx="28" cy="11" r="2.500" fill="#20c020"/><path d="M22 16L30 24L27 25L30 32L28 33L25 26L22 28Z" fill="#000"/></g>
</g>

<!-- minimap -->
<rect x="1277" y="484" width="163" height="278" fill="#000"/>
<rect x="1276" y="484" width="2" height="278" fill="#3a6f66"/>
<rect x="1278" y="518" width="160" height="209" fill="#f00"/>
<rect x="1288" y="530" width="141" height="184" fill="none" stroke="#8c9a9a" stroke-width="3"/>
<rect x="1314" y="544" width="88" height="157" fill="none" stroke="#8caaaa" stroke-width="3"/>
<g stroke="#30e0e0" fill="none">
<path d="M1343 544V701M1373 544V701" stroke-width="5"/>
<path d="M1314 559H1402M1314 575H1402M1314 591H1402M1314 607H1402M1314 622H1402M1314 638H1402M1314 654H1402M1314 670H1402M1314 685H1402" stroke-width="3" stroke-dasharray="22 3"/>
</g>
<g stroke="#a8e0e0" fill="none"><path d="M1285 710l6 8M1291 710l-6 8M1310 698l6 6M1316 698l-6 6M1340 698l6 6M1346 698l-6 6M1370 698l6 6M1376 698l-6 6M1311 618l5 7M1316 618l-5 7"/></g>
<!-- coords -->
<rect x="1277" y="761" width="163" height="2" fill="#3a8270"/>
<rect x="1277" y="763" width="163" height="43" fill="#50c8b0"/>
<text x="1281" y="781" class="m" font-size="15" textLength="126">X = 26.120705"</text>
<text x="1281" y="796" class="m" font-size="15" textLength="117">Y = 8.180884"</text>

<!-- Bottom bar -->
<rect x="0" y="806" width="1440" height="3" fill="#000"/>
<rect x="0" y="808" width="1440" height="32" fill="#ffffd8"/>
<rect x="0" y="840" width="1440" height="3" fill="#2a5a50"/>
<g fill="none" stroke="#000">
<rect x="8" y="814" width="17" height="17" stroke-width="1"/><rect x="5.500" y="811.500" width="22" height="22" stroke="#b8b890" stroke-width="2"/><path d="M10 816L22 829M10 816h4M10 816v4M22 829h-4M22 829v-4"/>
<rect x="40" y="814" width="17" height="17"/><rect x="37" y="811.500" width="23" height="22" stroke="#b8b890" stroke-width="2"/><path d="M42 829L52 816M47 815v9M44 829h12"/>
</g>
<path d="M31.500 808V838M63.500 808V840" stroke="#000"/>
<rect x="64" y="808" width="30" height="32" fill="#6fb8a0"/><rect x="68" y="811" width="23" height="26" fill="#ffffd8"/>
<rect x="73" y="815" width="13" height="16" fill="none" stroke="#000"/><path d="M79.500 815V831M73 822H86M73 819L77 815" stroke="#000" fill="none"/>
<text x="98" y="827" class="m" font-size="12" textLength="35">X Y :</text>
<rect x="143" y="808" width="172" height="32" fill="#fff"/>
<rect x="145.500" y="810.500" width="168" height="27" fill="#ffffd8" stroke="#b8b890" stroke-width="2"/>
<path d="M152 815V832" stroke="#777" stroke-dasharray="1 1"/>
<rect x="316" y="808" width="30" height="32" fill="#6fb8a0"/><rect x="320" y="811" width="23" height="26" fill="#ffffd8"/>
<rect x="324.500" y="815.500" width="14" height="17" fill="none" stroke="#000"/><path d="M331.500 818V827M331.500 829V831" stroke="#000" stroke-width="1.500"/>
<rect x="347" y="808" width="1" height="32" fill="#000"/>
<text x="352" y="827" class="m" font-size="12" textLength="216">&lt;M1&gt; - Select first area corner</text>
<rect x="1360" y="808" width="80" height="32" fill="#000"/>
<rect x="1362" y="808" width="76" height="32" fill="#50c8b0"/>
<path d="M1366 812H1436L1434 814H1368V835L1366 837Z" fill="#90e0d0"/><path d="M1436 837H1366L1368 835H1434V814L1436 812Z" fill="#2f7f70"/>
<text x="1373" y="829" class="m" font-size="14" fill="#103030" textLength="36">Inch</text>
<rect x="1417" y="822" width="12" height="5" fill="#9bdbdb" stroke="#2f7f70"/>

<!-- status -->
<rect x="0" y="843" width="1440" height="33" fill="#d4d0c8"/>
<rect x="1" y="843" width="1437" height="28" fill="#000"/>
<rect x="2" y="844" width="1435" height="26" fill="#e0ffff"/>
<rect x="5" y="846" width="1430" height="22" fill="#b0ffff"/>
<rect x="5" y="866" width="1430" height="2" fill="#4f9088"/><rect x="1433" y="846" width="2" height="22" fill="#4f9088"/>
<text x="629" y="860" class="m" font-size="12" textLength="183">10 r40 Lines were selected</text>

<!-- Popview 2 -->
<g>
<rect x="222" y="184" width="463" height="444" fill="#d4d0c8"/>
<rect x="684" y="184" width="1.500" height="444" fill="#555"/><rect x="222" y="627" width="463" height="1.500" fill="#555"/>
<rect x="226" y="188" width="456" height="18" fill="url(#tb)"/>
<use href="#ico" x="228" y="190"/>
<text x="245" y="200" class="a" fill="#fff" textLength="66">Popview - 2</text>
<rect x="665" y="189" width="16" height="14" fill="#d4d0c8" stroke="#555" stroke-width=".5"/><path d="M669 192l8 8M677 192l-8 8" stroke="#000" stroke-width="1.500"/>
<rect x="226" y="206" width="456" height="420" fill="#3a7a6c"/>
<rect x="229" y="208" width="416" height="388" fill="#000"/>
<rect x="645" y="208" width="3" height="388" fill="#9bdbdb"/>
<rect x="648" y="207" width="34" height="389" fill="#50c8b0"/>
<g transform="translate(225,185) scale(.3333)" clip-path="url(#c2)" shape-rendering="auto">
 <!-- bottom gold -->
 <rect x="320" y="705" width="940" height="138" fill="#b89600"/><rect x="703" y="717" width="550" height="113" fill="#000"/>
 <circle cx="383" cy="775" r="23" fill="#000"/><circle cx="473" cy="775" r="22" fill="#000"/>
 <circle cx="563" cy="775" r="26" fill="none" stroke="#000" stroke-width="10"/><circle cx="653" cy="775" r="27" fill="none" stroke="#000" stroke-width="6"/>
 <rect x="725" y="748" width="55" height="54" fill="#489800"/><circle cx="844" cy="775" r="27" fill="#489800"/><rect x="905" y="748" width="55" height="54" fill="#489800"/>
 <rect x="995" y="748" width="55" height="54" fill="#f00"/><circle cx="1114" cy="775" r="27" fill="#f00"/><rect x="1175" y="748" width="55" height="54" fill="#f00"/>
 <!-- trunk -->
 <path d="M612 75V590C612 620 590 637 565 637H300C260 637 232 665 232 710V1240H265V710C265 685 280 670 300 670H455V685H620V667H590C625 650 648 630 648 590V75Z" fill="#b89600"/>
 <rect x="640" y="667" width="162" height="18" rx="4" fill="#b89600"/>
 <g fill="none" stroke="#b89600">
  <path stroke-width="18" d="M455 90H552M455 118H552M455 146H552M455 175H552M455 203H552M440 231H552M455 259H552M455 287H552M455 316H552M455 344H552M440 372H552M455 400H552M455 428H552M440 456H552M455 484H552M425 512H552M455 540H552M455 568H552M455 596H552"/>
  <path stroke-width="13" d="M550 90H612M550 118H612M550 146H612M550 175H612M550 203H612M550 231H612M550 259H612M550 287H612M550 316H612M550 344H612M550 372H612M550 400H612M550 428H612M550 456H612M550 484H612M550 512H612M550 540H612M550 568H612M550 596H612"/>
  <path stroke-width="18" d="M705 100H800M705 128H818M705 158H800M705 186H800M705 214H800M705 242H800M705 272H818M705 300H800M705 328H800M705 356H818"/>
  <path stroke-width="13" d="M648 100H705M648 128H705M648 158H705M648 186H705M648 214H705M648 242H705M648 272H705M648 300H705M648 328H705M648 356H705"/>
  <path stroke-width="22" d="M440 82H800"/>
 </g>
 <rect x="585.500" y="75" width="3" height="557" fill="#8a8a8a"/><rect x="675.500" y="75" width="3" height="320" fill="#c8c8c8"/>
 <path d="M677 375V394H860A42 42 0 0 1 860 478H710V632M15 632H587M830 632H1252" fill="none" stroke="#fff" stroke-width="3"/>
 <g stroke="#fff" stroke-width="2.500" fill="none"><path d="M652 605L708 658M708 605L652 658M680 605L736 658M736 605L680 658"/></g>
 <circle cx="758" cy="582" r="12" fill="#b89600"/>
 <!-- right shapes -->
 <rect x="918" y="360" width="340" height="258" fill="#f00"/>
 <path d="M905 318H972V340L1000 372L970 395L930 362H905Z" fill="#489800"/>
 <circle cx="1028" cy="472" r="110" fill="#b89600"/>
 <rect x="905" y="205" width="67" height="45" fill="#489800"/><circle cx="930" cy="258" r="8" fill="#b89600"/><circle cx="948" cy="258" r="8" fill="#b89600"/>
 <path d="M1130 78L1252 200M1215 78V108L1252 140" stroke="#489800" stroke-width="9" fill="none"/>
 <text transform="translate(1272,217) scale(-1,1)" font-family="Liberation Sans" font-weight="bold" font-size="84" fill="#f00" stroke="#f00" stroke-width="3" textLength="205" lengthAdjust="spacingAndGlyphs">XHOFF</text>
 <text transform="translate(1255,290) scale(-1,1)" font-family="Liberation Mono" font-weight="bold" font-size="70" fill="#f00" textLength="200" lengthAdjust="spacingAndGlyphs">25_1</text>
 <!-- chip cluster -->
 <g fill="#489800">
 <rect x="68" y="176" width="120" height="114"/>
 <path d="M15 165H58V178H15ZM15 188H58V200H15ZM15 210H58V222H15ZM15 232H58V244H15ZM15 254H58V266H15ZM15 276H58V288H15Z"/>
 <path d="M198 165H245V178H198ZM198 188H300V200H198ZM198 210H245V222H198ZM198 232H245V244H198ZM198 254H245V266H198ZM198 276H245V288H198Z"/>
 <path d="M62 112H74V165H62ZM84 110H96V165H84ZM106 78H118V165H106ZM128 78H140V165H128ZM150 110H162V165H150ZM172 112H184V165H172Z"/>
 <path d="M62 304H74V350H62ZM84 304H96V350H84ZM106 304H118V350H106ZM128 304H140V350H128ZM150 304H162V350H150ZM172 304H184V350H172Z"/>
 <rect x="275" y="98" width="28" height="40"/><rect x="327" y="98" width="28" height="40"/><rect x="275" y="152" width="28" height="44"/><rect x="327" y="152" width="28" height="44"/><rect x="275" y="210" width="28" height="175"/><rect x="327" y="210" width="28" height="175"/>
 <rect x="275" y="382" width="28" height="38"/><rect x="327" y="382" width="28" height="38"/><rect x="275" y="438" width="28" height="38"/><rect x="327" y="438" width="28" height="38"/>
 <rect x="160" y="382" width="38" height="50"/><rect x="225" y="382" width="38" height="50"/>
 <rect x="15" y="382" width="15" height="26"/><rect x="48" y="382" width="38" height="26"/><rect x="105" y="382" width="38" height="26"/>
 <rect x="48" y="430" width="38" height="26"/><rect x="105" y="430" width="38" height="26"/><rect x="15" y="430" width="15" height="26"/>
 <rect x="195" y="495" width="42" height="66"/><rect x="305" y="495" width="42" height="66"/>
 </g>
 <g fill="#b89600"><path d="M98 205h18v14h-18zM120 205h18v14h-18zM142 205h18v14h-18zM98 225h18v14h-18zM120 225h18v14h-18zM142 225h18v14h-18zM98 245h18v14h-18zM120 245h18v14h-18zM142 245h18v14h-18z"/>
 <circle cx="363" cy="120" r="9"/><circle cx="363" cy="175" r="9"/><circle cx="120" cy="360" r="9"/><circle cx="155" cy="392" r="9"/><circle cx="270" cy="402" r="9"/><circle cx="40" cy="442" r="9"/><circle cx="97" cy="442" r="9"/><circle cx="270" cy="459" r="9"/><circle cx="363" cy="459" r="9"/><circle cx="22" cy="340" r="8"/><circle cx="218" cy="342" r="9"/><circle cx="237" cy="325" r="9"/><circle cx="260" cy="325" r="9"/><circle cx="260" cy="300" r="9"/><circle cx="313" cy="250" r="9"/><circle cx="347" cy="260" r="9"/><circle cx="313" cy="290" r="9"/><circle cx="400" cy="312" r="9"/><circle cx="428" cy="312" r="9"/>
 <circle cx="247" cy="522" r="8"/><circle cx="247" cy="538" r="8"/><circle cx="358" cy="522" r="8"/><circle cx="358" cy="538" r="8"/>
 <rect x="40" y="82" width="35" height="14"/><circle cx="100" cy="102" r="8"/><circle cx="138" cy="102" r="8"/><circle cx="174" cy="102" r="8"/></g>
 <path d="M96 80H104V100H96ZM134 78H142V100H134ZM170 78H178V100H170Z" fill="#f00"/>
 <path d="M15 200H25V350H15Z" fill="#b89600" opacity=".7"/><rect x="15" y="210" width="6" height="120" fill="#f00"/>
 <g fill="none" stroke-width="7">
  <path d="M218 345V295L290 225H370L440 295V320L420 345H218M218 310L290 240H365L425 300M260 305L310 315H370L400 290" stroke="#e81010"/>
  <path d="M225 290L295 215H345L415 280H455M280 335L330 305H360L380 340V370L350 395M135 350L160 365H275V340M240 170L280 132M200 190H380M415 250H455M375 305L410 290H440L455 315" stroke="#72a010" stroke-width="5"/>
  <path d="M300 225L350 275L330 300L300 275M260 290L300 335H360M400 255L360 300" stroke="#b89600" stroke-width="5"/>
 </g>
 <circle cx="385" cy="203" r="9" fill="#489800"/>
 <circle cx="390" cy="572" r="12" fill="#f00"/><circle cx="399" cy="582" r="12" fill="#489800"/><circle cx="390" cy="576" r="5" fill="#b89600"/>
 <text transform="translate(120,530) scale(-1,1)" font-family="Liberation Mono" font-weight="bold" font-size="56" fill="#489800" textLength="105" lengthAdjust="spacingAndGlyphs">CX8</text>
 <text transform="translate(120,600) scale(-1,1)" font-family="Liberation Sans" font-weight="bold" font-size="72" fill="#489800" stroke="#489800" stroke-width="3" textLength="105" lengthAdjust="spacingAndGlyphs">BEO</text>
 <!-- border dashed -->
 <path d="M16 1240V76H1252" fill="none" stroke="#fff" stroke-width="3" stroke-dasharray="14 6"/>
 <ellipse cx="640" cy="672" rx="214" ry="70" transform="rotate(1 640 672)" fill="none" stroke="#6a5a10" stroke-width="5" opacity=".35" />
 <ellipse cx="640" cy="668" rx="214" ry="72" fill="none" stroke="#d81cc8" stroke-width="6"/>
</g>
<g color="#9bdbdb">
<g transform="translate(648,209) scale(.85)"><use href="#bt"/><use href="#i-win"/></g>
<g transform="translate(648,244) scale(.85)"><use href="#bt"/><use href="#i-up"/></g>
<g transform="translate(648,279) scale(.85)"><use href="#bt"/><use href="#i-down"/></g>
<g transform="translate(648,314) scale(.85)"><use href="#bt"/><use href="#i-left"/></g>
<g transform="translate(648,349) scale(.85)"><use href="#bt"/><use href="#i-right"/></g>
<g transform="translate(648,384) scale(.85)"><use href="#bt"/><use href="#i-exp"/></g>
<g transform="translate(648,419) scale(.85)"><use href="#bt"/><use href="#i-arr"/></g>
</g>
<rect x="228" y="598" width="453" height="26" fill="#9bdbdb"/>
<path d="M228 598H681L679 600H230V622L228 624Z" fill="#d0f0f0"/><path d="M681 624H228L230 621H679V600L681 598Z" fill="#4f8a84"/>
<text x="432" y="616" class="m" font-size="14" textLength="45">Close</text>
</g>

<!-- Popview 1 -->
<g>
<rect x="835" y="130" width="400" height="444" fill="#d4d0c8"/>
<rect x="1234" y="130" width="1.500" height="444" fill="#555"/><rect x="835" y="573" width="400" height="1.500" fill="#555"/>
<rect x="839" y="134" width="393" height="18" fill="url(#tg)"/>
<use href="#ico" x="841" y="136"/>
<text x="857" y="146" class="a" fill="#d8d8d8" textLength="64">Popview - 1</text>
<rect x="1214" y="135" width="16" height="14" fill="#d4d0c8" stroke="#555" stroke-width=".5"/><path d="M1218 138l8 8M1226 138l-8 8" stroke="#000" stroke-width="1.500"/>
<rect x="839" y="152" width="393" height="420" fill="#3a7a6c"/>
<rect x="842" y="155" width="351" height="385" fill="#000"/>
<rect x="1193" y="154" width="3" height="386" fill="#9bdbdb"/>
<rect x="1196" y="152" width="36" height="388" fill="#50c8b0"/>
<g transform="translate(835,130) scale(.3333)" clip-path="url(#c1)" shape-rendering="auto">
 <rect x="114" y="376" width="960" height="181" fill="#b89600"/><rect x="614" y="394" width="460" height="146" fill="#000"/>
 <circle cx="195" cy="468" r="29" fill="#000"/><circle cx="312" cy="468" r="29" fill="#000"/>
 <circle cx="432" cy="468" r="32" fill="none" stroke="#000" stroke-width="14"/><circle cx="550" cy="468" r="37" fill="none" stroke="#000" stroke-width="7"/>
 <rect x="645" y="432" width="72" height="71" fill="#489800"/><ellipse cx="800" cy="468" rx="34" ry="36" fill="#489800"/><rect x="882" y="432" width="72" height="71" fill="#489800"/><rect x="1002" y="432" width="72" height="71" fill="#f00"/>
 <rect x="290" y="585" width="216" height="27" rx="10" fill="#b89600"/>
 <path d="M545 583H746V603H1074V650H600C565 655 545 670 543 700V1230H497V700C497 650 520 625 565 612H545A14 14 0 0 1 545 583Z" fill="#b89600"/>
 <g fill="none" stroke="#b89600">
 <path stroke-width="25" d="M625 702H746M625 740H756M625 778H780M625 815H756M625 854H746M625 890H756M625 927H746M625 964H746M625 1002H756M625 1040H746M625 1077H746M625 1113H746M625 1151H746M625 1188H756M625 1222H746"/>
 <path stroke-width="20" d="M543 702H630M543 740H630M543 778H630M543 815H630M543 854H630M543 890H630M543 927H630M543 964H630M543 1002H630M543 1040H630M543 1077H630M543 1113H630M543 1151H630M543 1188H630M543 1222H630"/>
 <path stroke-width="25" d="M290 1019H415M290 1055H415M290 1093H415M290 1130H415M290 1167H415M290 1205H415"/>
 <path stroke-width="20" d="M410 1019H497M410 1055H497M410 1093H497M410 1130H497M410 1167H497M410 1205H497"/>
 </g>
 <g fill="#b89600"><circle cx="280" cy="1019" r="11"/><circle cx="280" cy="1130" r="11"/><circle cx="756" cy="740" r="12"/><circle cx="780" cy="778" r="12"/><circle cx="756" cy="815" r="12"/><circle cx="756" cy="890" r="12"/><circle cx="756" cy="1002" r="12"/><circle cx="756" cy="1188" r="12"/></g>
 <rect x="459.500" y="1000" width="3" height="230" fill="#8a8a8a"/><rect x="576.500" y="700" width="3" height="530" fill="#8a8a8a"/>
 <path d="M22 658H412V858H222A56 56 0 0 0 218 972H460V1010M578 700V658H1074" fill="none" stroke="#fff" stroke-width="3"/>
 <path d="M388 634L436 682M436 634L388 682" stroke="#fff" stroke-width="2"/>
 <circle cx="348" cy="722" r="15" fill="#b89600"/>
 <path d="M22 675H138V850H22Z" fill="#f00"/>
 <path d="M22 990L50 965L125 1012H153V1067H66V1030Z" fill="#489800"/>
 <circle cx="-7" cy="865" r="145" fill="#b89600"/>
 <rect x="66" y="1158" width="87" height="60" fill="#489800"/><circle cx="97" cy="1150" r="12" fill="#b89600"/><circle cx="124" cy="1150" r="12" fill="#b89600"/>
 <circle cx="835" cy="738" r="17" fill="#f00"/><circle cx="827" cy="722" r="17" fill="#489800"/><circle cx="830" cy="730" r="7" fill="#b89600"/>
 <g fill="#489800"><rect x="882" y="750" width="60" height="83"/><rect x="1032" y="750" width="40" height="83"/><rect x="882" y="858" width="32" height="54"/><rect x="945" y="858" width="35" height="54"/><rect x="882" y="932" width="32" height="56"/><rect x="945" y="932" width="35" height="56"/><rect x="1002" y="920" width="48" height="68"/><rect x="882" y="1005" width="32" height="220"/><rect x="945" y="1005" width="35" height="220"/><rect x="945" y="1085" width="40" height="50"/><path d="M1028 1120H1074V1135H1028ZM1028 1165H1074V1180H1028ZM1028 1190H1074V1205H1028ZM830 1215H1074V1225H830Z"/></g>
 <g fill="#b89600"><circle cx="874" cy="785" r="11"/><circle cx="874" cy="805" r="11"/><circle cx="1022" cy="785" r="11"/><circle cx="1022" cy="805" r="11"/><circle cx="872" cy="885" r="11"/><circle cx="992" cy="885" r="11"/><circle cx="992" cy="960" r="11"/><circle cx="783" cy="1077" r="11"/><circle cx="820" cy="1077" r="11"/><circle cx="937" cy="1110" r="11"/><circle cx="890" cy="1147" r="11"/><circle cx="937" cy="1160" r="11"/><circle cx="1005" cy="1060" r="11"/><circle cx="1037" cy="1060" r="11"/><circle cx="1060" cy="1037" r="11"/><circle cx="1060" cy="1097" r="11"/><circle cx="1005" cy="1095" r="11"/></g>
 <g fill="none" stroke-width="8">
  <path d="M746 1034H980L1040 1090V1120L980 1200H850L780 1120L750 1085M770 1053H960M800 1110L830 1080H900L940 1130V1170H850L810 1125" stroke="#e81010"/>
  <path d="M746 1045L800 1110M880 980L845 1015V1075L820 1100M980 1025L1000 1005H1074M1020 1120L1074 1085M746 1170H880M746 1140H790" stroke="#72a010" stroke-width="5"/>
  <path d="M746 1060L810 1130L860 1075H920L960 1130L1000 1150L1060 1100M860 1175L940 1180L1000 1130M810 1130L830 1150" stroke="#b89600" stroke-width="6"/>
 </g>
 <path d="M23 1230V79H1070" fill="none" stroke="#fff" stroke-width="3" stroke-dasharray="14 6"/>
 <circle cx="528" cy="578" r="93" fill="none" stroke="#6a5a10" stroke-width="5" opacity=".3" transform="translate(3,4)"/>
 <circle cx="526" cy="574" r="93" fill="none" stroke="#d81cc8" stroke-width="6"/>
</g>
<g color="#9bdbdb">
<g transform="translate(1197,154) scale(.87)"><use href="#bt"/><use href="#i-win"/></g>
<g transform="translate(1197,189) scale(.87)"><use href="#bt"/><use href="#i-up"/></g>
<g transform="translate(1197,224) scale(.87)"><use href="#bt"/><use href="#i-down"/></g>
<g transform="translate(1197,259) scale(.87)"><use href="#bt"/><use href="#i-left"/></g>
<g transform="translate(1197,294) scale(.87)"><use href="#bt"/><use href="#i-right"/></g>
<g transform="translate(1197,329) scale(.87)"><use href="#bt"/><use href="#i-exp"/></g>
<g transform="translate(1197,364) scale(.87)"><use href="#bt"/><use href="#i-arr"/></g>
</g>
<rect x="840" y="544" width="391" height="26" fill="#9bdbdb"/>
<path d="M840 544H1231L1229 546H842V568L840 570Z" fill="#d0f0f0"/><path d="M1231 570H840L842 567H1229V546L1231 544Z" fill="#4f8a84"/>
<text x="1012" y="561" class="m" font-size="14" textLength="44">Close</text>
</g>
</svg>
</body></html>
